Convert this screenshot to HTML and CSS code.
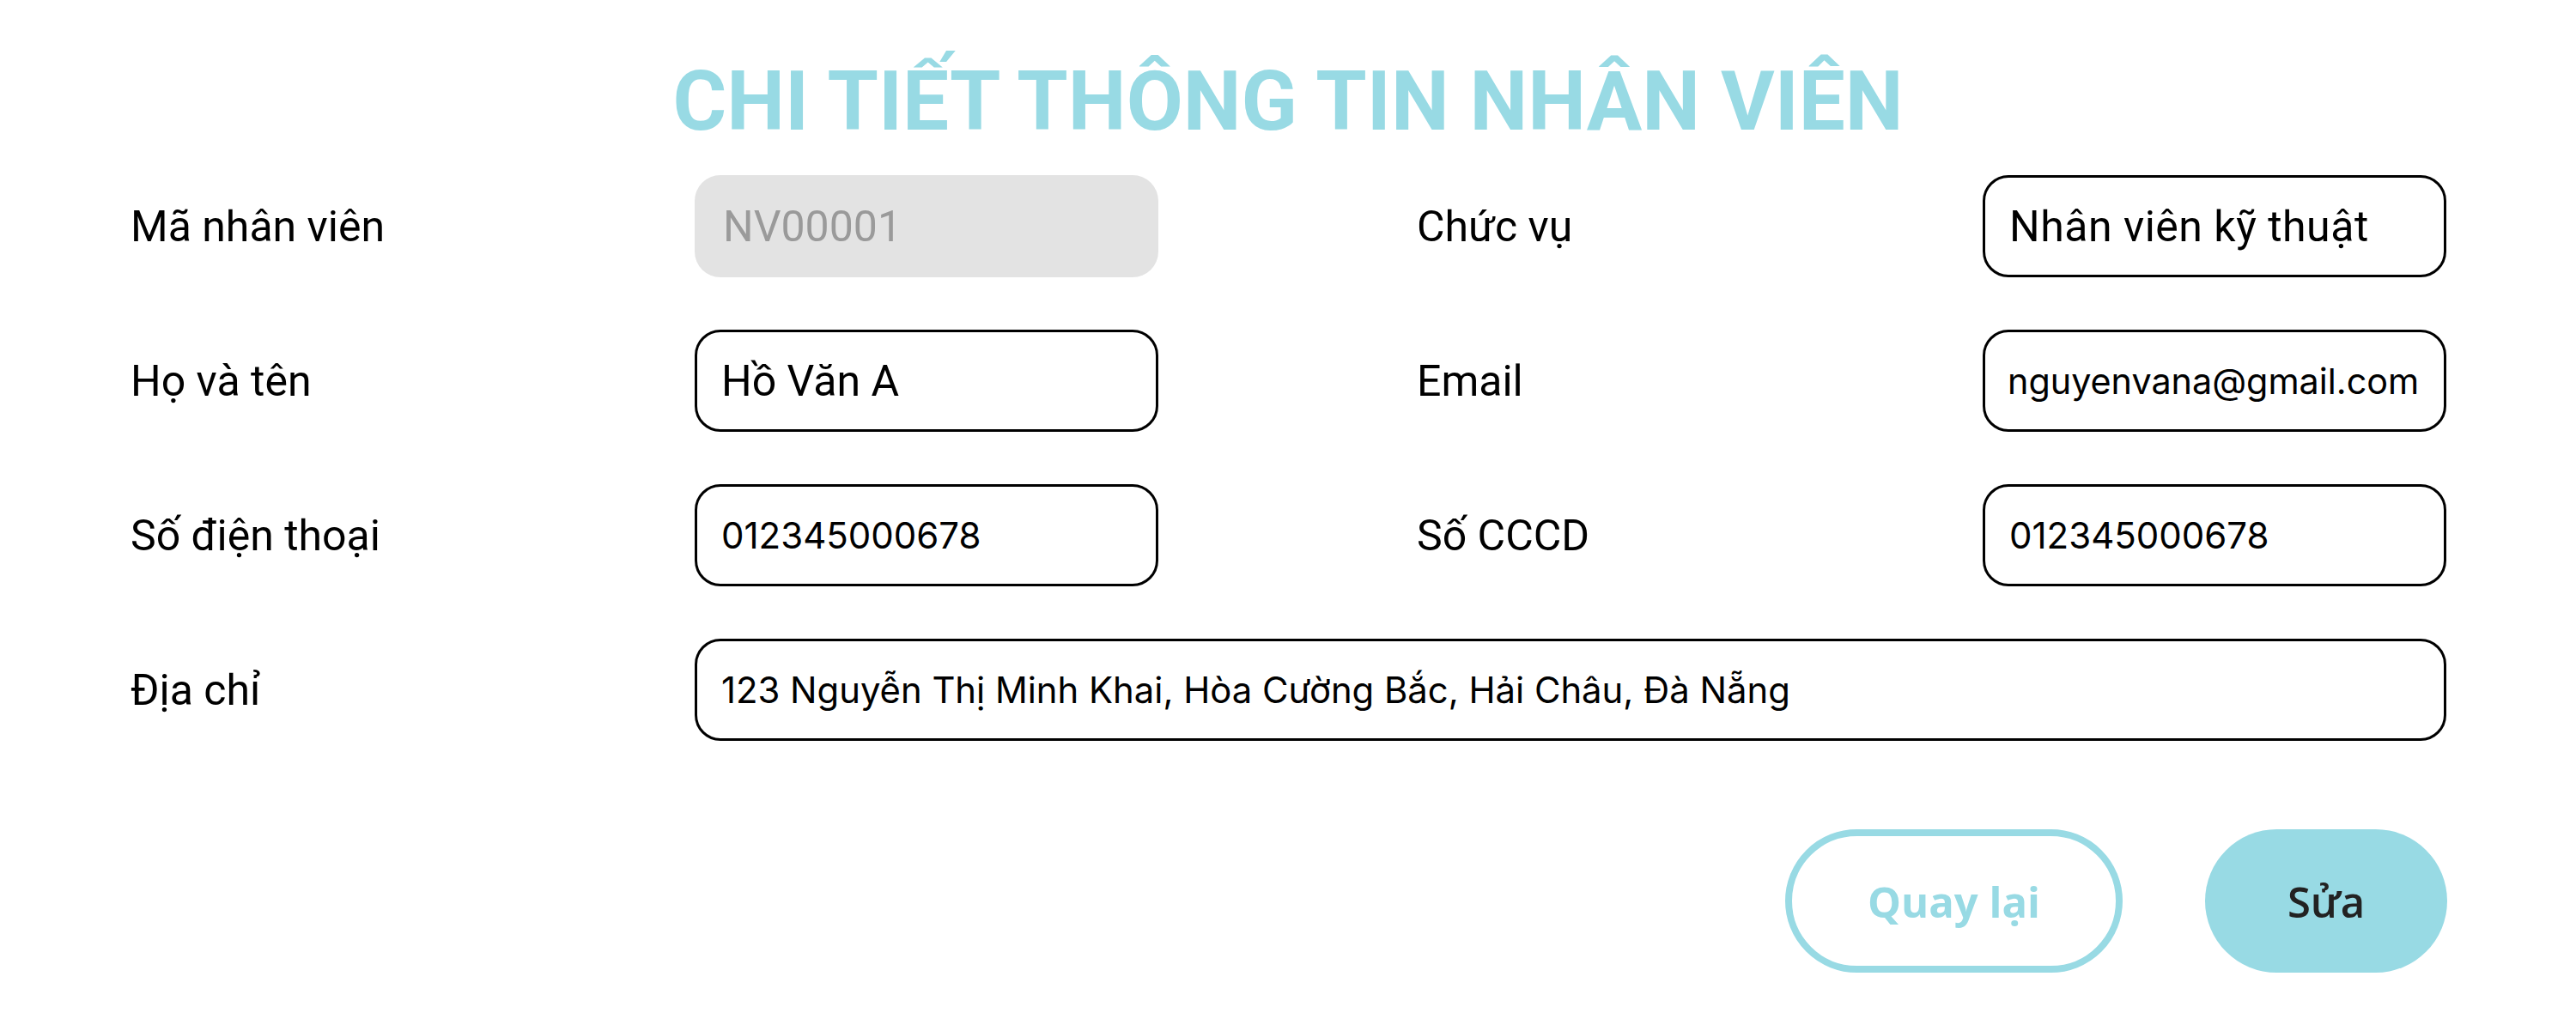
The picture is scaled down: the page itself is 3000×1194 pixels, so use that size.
FILE: index.html
```html
<!DOCTYPE html>
<html lang="vi">
<head>
<meta charset="utf-8">
<title>Chi tiết thông tin nhân viên</title>
<link rel="stylesheet" href="styles.css">
</head>
<body>
<main class="page">
  <h1 class="title">CHI TIẾT THÔNG TIN NHÂN VIÊN</h1>
  <section class="form">
    <div class="label">Mã nhân viên</div>
    <div class="field field-disabled">NV00001</div>
    <div class="spacer"></div>
    <div class="label">Chức vụ</div>
    <div class="field field-wide-text">Nhân viên kỹ thuật</div>

    <div class="label">Họ và tên</div>
    <div class="field">Hồ Văn A</div>
    <div class="spacer"></div>
    <div class="label">Email</div>
    <div class="field field-inter field-email">nguyenvana@gmail.com</div>

    <div class="label">Số điện thoại</div>
    <div class="field field-inter">012345000678</div>
    <div class="spacer"></div>
    <div class="label">Số CCCD</div>
    <div class="field field-inter">012345000678</div>

    <div class="label">Địa chỉ</div>
    <div class="field field-inter field-wide">123 Nguyễn Thị Minh Khai, Hòa Cường Bắc, Hải Châu, Đà Nẵng</div>
  </section>
  <div class="actions">
    <button class="btn btn-outline">Quay lại</button>
    <button class="btn btn-fill">Sửa</button>
  </div>
</main>
</body>
</html>
```

FILE: styles.css
```css
html, body {
  margin: 0;
  padding: 0;
  background: #ffffff;
}

body {
  font-family: Roboto, "Noto Sans", sans-serif;
  color: #000;
}

.page {
  width: 3000px;
  padding-top: 70px;
  box-sizing: border-box;
}

.title {
  margin: 0 0 38px 0;
  text-align: center;
  font-family: Roboto, sans-serif;
  font-weight: 700;
  font-size: 96px;
  line-height: 96px;
  color: #98dae4;
}

.form {
  display: grid;
  grid-template-columns: 657px 540px 301px 659px 540px;
  grid-auto-rows: 119px;
  row-gap: 61px;
  margin-left: 152px;
}

.label {
  display: flex;
  align-items: center;
  font-family: Roboto, sans-serif;
  font-size: 50px;
  color: #000;
  white-space: nowrap;
}

.field {
  display: flex;
  align-items: center;
  box-sizing: border-box;
  border: 3px solid #000;
  border-radius: 30px;
  padding-left: 28px;
  font-family: Roboto, sans-serif;
  font-size: 50px;
  color: #000;
  white-space: nowrap;
  overflow: hidden;
}

.field-wide-text {
  letter-spacing: 0.5px;
}

.field-disabled {
  border: none;
  background: #e3e3e3;
  color: #9a9a9a;
  padding-left: 33px;
}

.field-inter {
  font-family: Inter, sans-serif;
  font-size: 42px;
}

.field-email {
  font-size: 41.3px;
  padding-left: 26px;
}

.field-wide {
  grid-column: 2 / 6;
  font-size: 41.8px;
}

.actions {
  display: flex;
  justify-content: flex-end;
  gap: 96px;
  margin-top: 103px;
  padding-right: 150px;
}

.btn {
  box-sizing: border-box;
  height: 167px;
  border-radius: 84px;
  font-family: "Open Sans", sans-serif;
  font-weight: 700;
  font-size: 49px;
  cursor: pointer;
  padding: 0;
}

.btn-outline {
  width: 393px;
  background: #fff;
  border: 8px solid #98dae4;
  color: #98dae4;
}

.btn-fill {
  width: 282px;
  background: #98dae4;
  border: none;
  color: #222;
  font-weight: 600;
}
```
